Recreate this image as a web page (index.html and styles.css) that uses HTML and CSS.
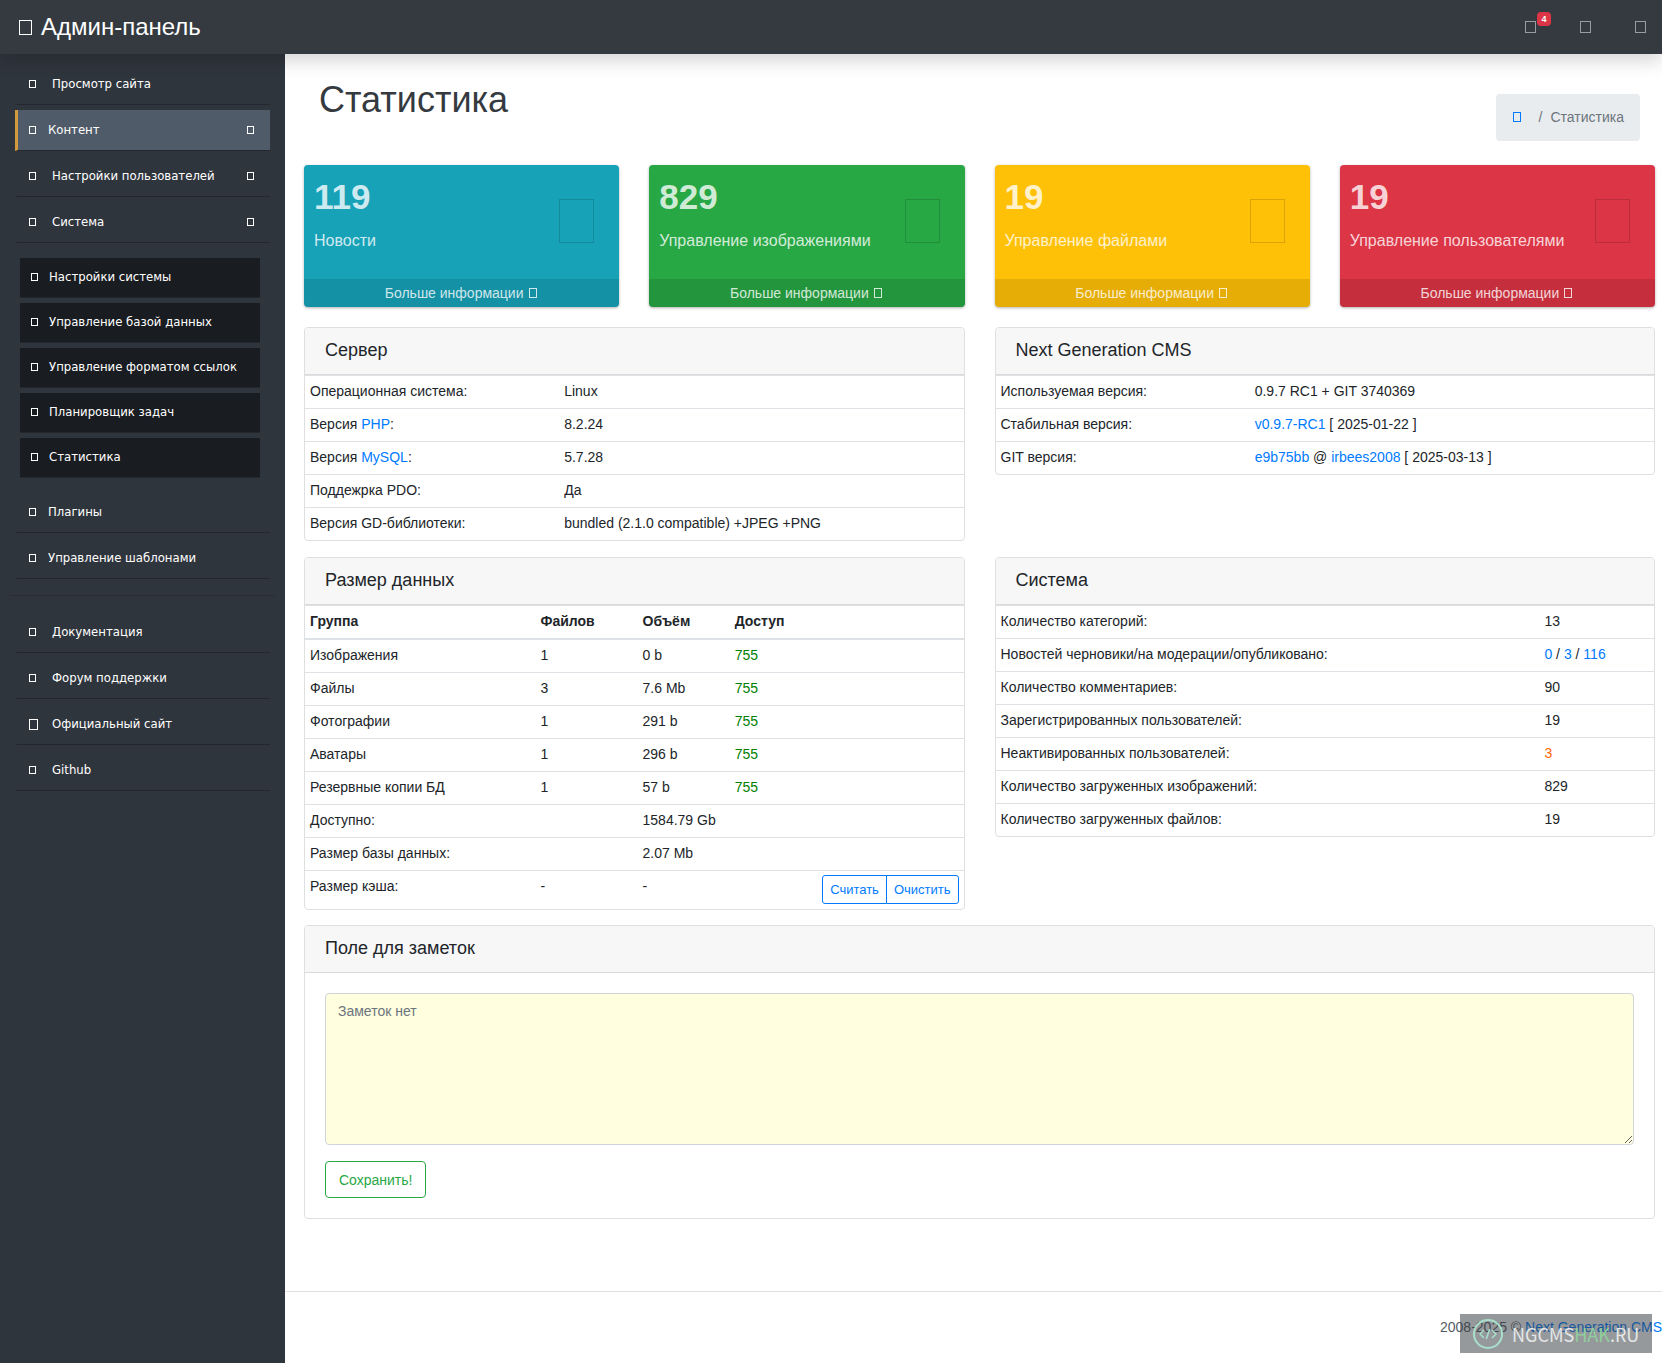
FILE: index.html
```html
<!DOCTYPE html>
<html lang="ru">
<head>
<meta charset="utf-8">
<title>Админ-панель</title>
<meta name="viewport" content="width=device-width, initial-scale=1">
<link rel="stylesheet" href="styles.css">
</head>
<body>
<header class="topbar">
  <a class="brand" href="#"><span class="glyph glyph-brand"></span>Админ-панель</a>
  <nav class="topnav" aria-label="Профиль">
    <a href="#" class="topnav-link" aria-label="Уведомления"><span class="glyph glyph-nav"></span><span class="badge">4</span></a>
    <a href="#" class="topnav-link" aria-label="Добавить"><span class="glyph glyph-nav"></span></a>
    <a href="#" class="topnav-link" aria-label="Пользователь"><span class="glyph glyph-nav"></span></a>
  </nav>
</header>
<div class="layout">
  <nav class="sidebar" aria-label="Меню">
    <ul class="menu">
      <li><a class="item wide" href="#"><span class="glyph"></span>Просмотр сайта</a></li>
      <li><a class="item active" href="#"><span class="glyph"></span>Контент<span class="glyph chevron"></span></a></li>
      <li><a class="item wide" href="#"><span class="glyph"></span>Настройки пользователей<span class="glyph chevron"></span></a></li>
      <li><a class="item wide" href="#"><span class="glyph"></span>Система<span class="glyph chevron"></span></a>
        <ul class="submenu">
          <li><a class="subitem" href="#"><span class="glyph"></span>Настройки системы</a></li>
          <li><a class="subitem" href="#"><span class="glyph"></span>Управление базой данных</a></li>
          <li><a class="subitem" href="#"><span class="glyph"></span>Управление форматом ссылок</a></li>
          <li><a class="subitem" href="#"><span class="glyph"></span>Планировщик задач</a></li>
          <li><a class="subitem" href="#"><span class="glyph"></span>Статистика</a></li>
        </ul>
      </li>
      <li><a class="item" href="#"><span class="glyph"></span>Плагины</a></li>
      <li><a class="item" href="#"><span class="glyph"></span>Управление шаблонами</a></li>
    </ul>
    <hr class="divider">
    <ul class="menu">
      <li><a class="item wide" href="#"><span class="glyph"></span>Документация</a></li>
      <li><a class="item wide" href="#"><span class="glyph"></span>Форум поддержки</a></li>
      <li><a class="item wide large" href="#"><span class="glyph"></span>Официальный сайт</a></li>
      <li><a class="item wide" href="#"><span class="glyph"></span>Github</a></li>
    </ul>
  </nav>
  <div class="page">
    <main class="content">
      <div class="page-head">
        <h1>Статистика</h1>
        <nav class="breadcrumb" aria-label="Навигация">
          <a href="#" aria-label="Главная"><span class="glyph glyph-crumb"></span></a>
          <span>/</span><span>Статистика</span>
        </nav>
      </div>

      <div class="stats">
        <section class="stat info">
          <div class="stat-body"><div><strong>119</strong><p>Новости</p></div><span class="stat-icon"></span></div>
          <a href="#">Больше информации<span class="glyph glyph-more"></span></a>
        </section>
        <section class="stat success">
          <div class="stat-body"><div><strong>829</strong><p>Управление изображениями</p></div><span class="stat-icon"></span></div>
          <a href="#">Больше информации<span class="glyph glyph-more"></span></a>
        </section>
        <section class="stat warning">
          <div class="stat-body"><div><strong>19</strong><p>Управление файлами</p></div><span class="stat-icon"></span></div>
          <a href="#">Больше информации<span class="glyph glyph-more"></span></a>
        </section>
        <section class="stat danger">
          <div class="stat-body"><div><strong>19</strong><p>Управление пользователями</p></div><span class="stat-icon"></span></div>
          <a href="#">Больше информации<span class="glyph glyph-more"></span></a>
        </section>
      </div>

      <div class="cards">
        <section class="card">
          <h2>Сервер</h2>
          <table class="pair">
            <tr><td>Операционная система:</td><td>Linux</td></tr>
            <tr><td>Версия <a href="#">PHP</a>:</td><td>8.2.24</td></tr>
            <tr><td>Версия <a href="#">MySQL</a>:</td><td>5.7.28</td></tr>
            <tr><td>Поддежрка PDO:</td><td>Да</td></tr>
            <tr><td>Версия GD-библиотеки:</td><td>bundled (2.1.0 compatible) +JPEG +PNG</td></tr>
          </table>
        </section>
        <section class="card">
          <h2>Next Generation CMS</h2>
          <table class="pair">
            <tr><td>Используемая версия:</td><td>0.9.7 RC1 + GIT 3740369</td></tr>
            <tr><td>Стабильная версия:</td><td><a href="#">v0.9.7-RC1</a> [ 2025-01-22 ]</td></tr>
            <tr><td>GIT версия:</td><td><a href="#">e9b75bb</a> @ <a href="#">irbees2008</a> [ 2025-03-13 ]</td></tr>
          </table>
        </section>
        <section class="card">
          <h2>Размер данных</h2>
          <table class="sizes">
            <thead>
              <tr><th>Группа</th><th>Файлов</th><th>Объём</th><th colspan="2">Доступ</th></tr>
            </thead>
            <tbody>
              <tr><td>Изображения</td><td>1</td><td>0 b</td><td class="ok" colspan="2">755</td></tr>
              <tr><td>Файлы</td><td>3</td><td>7.6 Mb</td><td class="ok" colspan="2">755</td></tr>
              <tr><td>Фотографии</td><td>1</td><td>291 b</td><td class="ok" colspan="2">755</td></tr>
              <tr><td>Аватары</td><td>1</td><td>296 b</td><td class="ok" colspan="2">755</td></tr>
              <tr><td>Резервные копии БД</td><td>1</td><td>57 b</td><td class="ok" colspan="2">755</td></tr>
              <tr><td colspan="2">Доступно:</td><td colspan="3">1584.79 Gb</td></tr>
              <tr><td colspan="2">Размер базы данных:</td><td colspan="3">2.07 Mb</td></tr>
              <tr><td>Размер кэша:</td><td>-</td><td>-</td><td class="actions" colspan="2"><div class="btn-group"><button type="button">Считать</button><button type="button">Очистить</button></div></td></tr>
            </tbody>
          </table>
        </section>
        <section class="card">
          <h2>Система</h2>
          <table class="totals">
            <tr><td>Количество категорий:</td><td>13</td></tr>
            <tr><td>Новостей черновики/на модерации/опубликовано:</td><td><a href="#">0</a> / <a href="#">3</a> / <a href="#">116</a></td></tr>
            <tr><td>Количество комментариев:</td><td>90</td></tr>
            <tr><td>Зарегистрированных пользователей:</td><td>19</td></tr>
            <tr><td>Неактивированных пользователей:</td><td class="alert">3</td></tr>
            <tr><td>Количество загруженных изображений:</td><td>829</td></tr>
            <tr><td>Количество загруженных файлов:</td><td>19</td></tr>
          </table>
        </section>
      </div>

      <form class="card notes">
        <h2><label for="note">Поле для заметок</label></h2>
        <div class="notes-body">
          <textarea id="note" placeholder="Заметок нет"></textarea>
          <button type="button" class="save">Сохранить!</button>
        </div>
      </form>
    </main>
    <footer class="footer">2008-2025 © <a href="#">Next Generation CMS</a></footer>
  </div>
</div>
<div class="watermark">
  <svg width="30" height="30" viewBox="0 0 30 30" fill="none" stroke="#a8e0cc" stroke-linecap="round" stroke-linejoin="round" aria-hidden="true">
    <circle cx="15" cy="15" r="14" stroke-width="2"/>
    <path d="M10.500 11.500 7 15l3.500 3.500M19.500 11.500 23 15l-3.500 3.500M16.500 10.500l-3 9" stroke-width="1.500"/>
  </svg>
  <span>NGCMS<span class="hak">HAK</span>.RU</span>
</div>
</body>
</html>
```
FILE: styles.css
```css
*, *::before, *::after { box-sizing: border-box; }

body {
  margin: 0;
  min-height: 100vh;
  display: flex;
  flex-direction: column;
  position: relative;
  overflow-x: hidden;
  font: 14px/22px "Liberation Sans", Arial, sans-serif;
  color: #212529;
  background: #fff;
}

a { color: #007bff; text-decoration: none; }
ul { list-style: none; margin: 0; padding: 0; }
h1, h2, p { margin: 0; font-weight: 400; }
button { font-family: inherit; cursor: pointer; }

/* Empty-box icon */
.glyph {
  display: inline-block;
  flex: none;
  width: 7px;
  height: 8px;
  border: 1px solid currentColor;
}

/* Top bar */
.topbar {
  position: relative;
  z-index: 1;
  display: flex;
  align-items: center;
  justify-content: space-between;
  height: 54px;
  padding: 0 16px 0 19px;
  background: #343a40;
  box-shadow: 0 8px 16px rgba(0, 0, 0, .15);
}
.brand {
  display: flex;
  align-items: center;
  gap: 9px;
  color: #fff;
  font-size: 24px;
}
.glyph-brand { width: 13px; height: 15px; }
.topnav { display: flex; gap: 44px; }
.topnav-link {
  position: relative;
  display: flex;
  color: rgba(255, 255, 255, .5);
}
.glyph-nav { width: 11px; height: 12px; }
.badge {
  position: absolute;
  left: 12px;
  top: -9px;
  width: 14px;
  height: 14px;
  border-radius: 4px;
  background: #dc3545;
  color: #fff;
  font-size: 9px;
  font-weight: 700;
  line-height: 14px;
  text-align: center;
}

.layout { flex: 1; display: flex; }

/* Sidebar */
.sidebar {
  flex: none;
  width: 285px;
  padding: 10px;
  background: #2f353d;
  font: 13px/20px "DejaVu Sans Condensed", Tahoma, sans-serif;
}
.menu { padding: 0 5px; }
.menu > li { margin-bottom: 5px; }
.item, .subitem {
  display: flex;
  align-items: center;
  color: #fff;
}
.item {
  gap: 12px;
  height: 41px;
  padding: 0 16px 0 11px;
  border-left: 3px solid transparent;
  border-bottom: 1px solid #24282e;
}
.item.wide { gap: 16px; }
.item.active { background: #4f5b69; border-left-color: #d19b3d; }
.item.large { gap: 14px; }
.item.large .glyph { width: 9px; height: 11px; }
.item .chevron { margin-left: auto; }
.submenu {
  display: grid;
  gap: 5px;
  padding: 15px 10px 9px 5px;
}
.subitem {
  gap: 11px;
  height: 40px;
  padding: 0 11px 2px;
  background: #191c20;
  border-bottom: 1px solid #24282e;
}
.divider {
  margin: 16px 0;
  border: 0;
  border-top: 1px solid #292e35;
}

/* Page */
.page {
  flex: 1;
  min-width: 0;
  display: flex;
  flex-direction: column;
}
.content { flex: 1; padding: 24px 7px 72px 19px; }

.page-head {
  display: flex;
  justify-content: space-between;
  align-items: flex-start;
  padding: 0 15px;
  height: 87px;
}
h1 { font-size: 36px; line-height: 44px; color: #343a40; }
.breadcrumb {
  display: flex;
  align-items: center;
  gap: 8px;
  margin-top: 16px;
  padding: 12px 16px 13px 17px;
  border-radius: 4px;
  background: #e9ecef;
  color: #6c757d;
}
.breadcrumb a { display: flex; margin-right: 10px; }
.glyph-crumb { width: 8px; height: 10px; }

.stats {
  display: grid;
  grid-template-columns: repeat(4, 1fr);
  gap: 30px;
}
.stat {
  overflow: hidden;
  border-radius: 4px;
  box-shadow: 0 1px 3px rgba(0, 0, 0, .3);
  color: rgba(255, 255, 255, .8);
}
.stat-body {
  display: flex;
  align-items: center;
  justify-content: space-between;
  height: 114px;
  padding: 0 25px 2px 10px;
}
.stat strong { display: block; font-size: 35px; line-height: 40px; margin-bottom: 12px; }
.stat p { font-size: 16px; line-height: 24px; margin-bottom: 12px; }
.stat-icon { width: 35px; height: 44px; border: 1px solid rgba(0, 0, 0, .15); }
.stat a {
  display: flex;
  align-items: center;
  justify-content: center;
  gap: 5px;
  height: 28px;
  padding-right: 2px;
  background: rgba(0, 0, 0, .1);
  color: inherit;
}
.glyph-more { width: 8px; height: 10px; }
.info { background: #17a2b8; }
.success { background: #28a745; }
.warning { background: #ffc107; }
.danger { background: #dc3545; }

/* Cards */
.cards {
  display: grid;
  grid-template-columns: repeat(2, 1fr);
  align-items: start;
  gap: 16px 30px;
  margin: 20px 0 15px;
}
.card {
  overflow: hidden;
  border: 1px solid #dfdfdf;
  border-radius: 4px;
}
h2 {
  height: 47px;
  padding: 0 20px;
  border-bottom: 1px solid #dadada;
  background: #f7f7f7;
  font-size: 18px;
  line-height: 44px;
}
table {
  width: 100%;
  table-layout: fixed;
  border-spacing: 0;
}
td, th {
  padding: 4px 5px 6px;
  border-top: 1px solid #dee2e6;
  text-align: left;
  vertical-align: top;
}
.pair td:first-child { width: 38.600%; }
.totals td:first-child { width: 82.600%; }
.sizes th { border-bottom: 2px solid #dee2e6; }
.sizes tbody tr:first-child td { border-top: 0; }
.sizes th:nth-child(1) { width: 35%; }
.sizes th:nth-child(2) { width: 15.500%; }
.sizes th:nth-child(3) { width: 14%; }
.sizes .actions { padding-bottom: 5px; }
.ok { color: green; }
.alert { color: #ff6600; }

.btn-group { display: flex; justify-content: flex-end; }
.btn-group button {
  height: 29px;
  padding: 0 7px;
  border: 1px solid #007bff;
  border-radius: 3px 0 0 3px;
  background: #fff;
  color: #007bff;
  font-size: 13px;
}
.btn-group button + button { margin-left: -1px; border-radius: 0 3px 3px 0; }

.notes-body { padding: 20px; }
textarea {
  display: block;
  width: 100%;
  height: 152px;
  margin-bottom: 16px;
  padding: 6px 12px;
  border: 1px solid #ced4da;
  border-radius: 4px;
  background: #ffffe0;
  font: inherit;
  resize: vertical;
}
textarea::placeholder { color: #6c757d; }
.save {
  display: block;
  height: 37px;
  padding: 0 13px;
  border: 1px solid #28a745;
  border-radius: 4px;
  background: #fff;
  color: #28a745;
  font-size: 14px;
}

.footer {
  padding: 24px 0 25px;
  border-top: 1px solid #dee2e6;
  color: #555c63;
  text-align: right;
  white-space: nowrap;
}

/* Site mark laid over the page corner */
.watermark {
  position: absolute;
  right: 10px;
  bottom: 10px;
  display: flex;
  align-items: center;
  gap: 9px;
  width: 192px;
  height: 39px;
  padding: 0 13px;
  background: rgba(45, 52, 57, .5);
  color: #e4e6e7;
  font: 18px/30px "Noto Sans CJK SC", sans-serif;
}
.watermark svg { flex: none; }
.hak { color: #8fce9b; }
```
